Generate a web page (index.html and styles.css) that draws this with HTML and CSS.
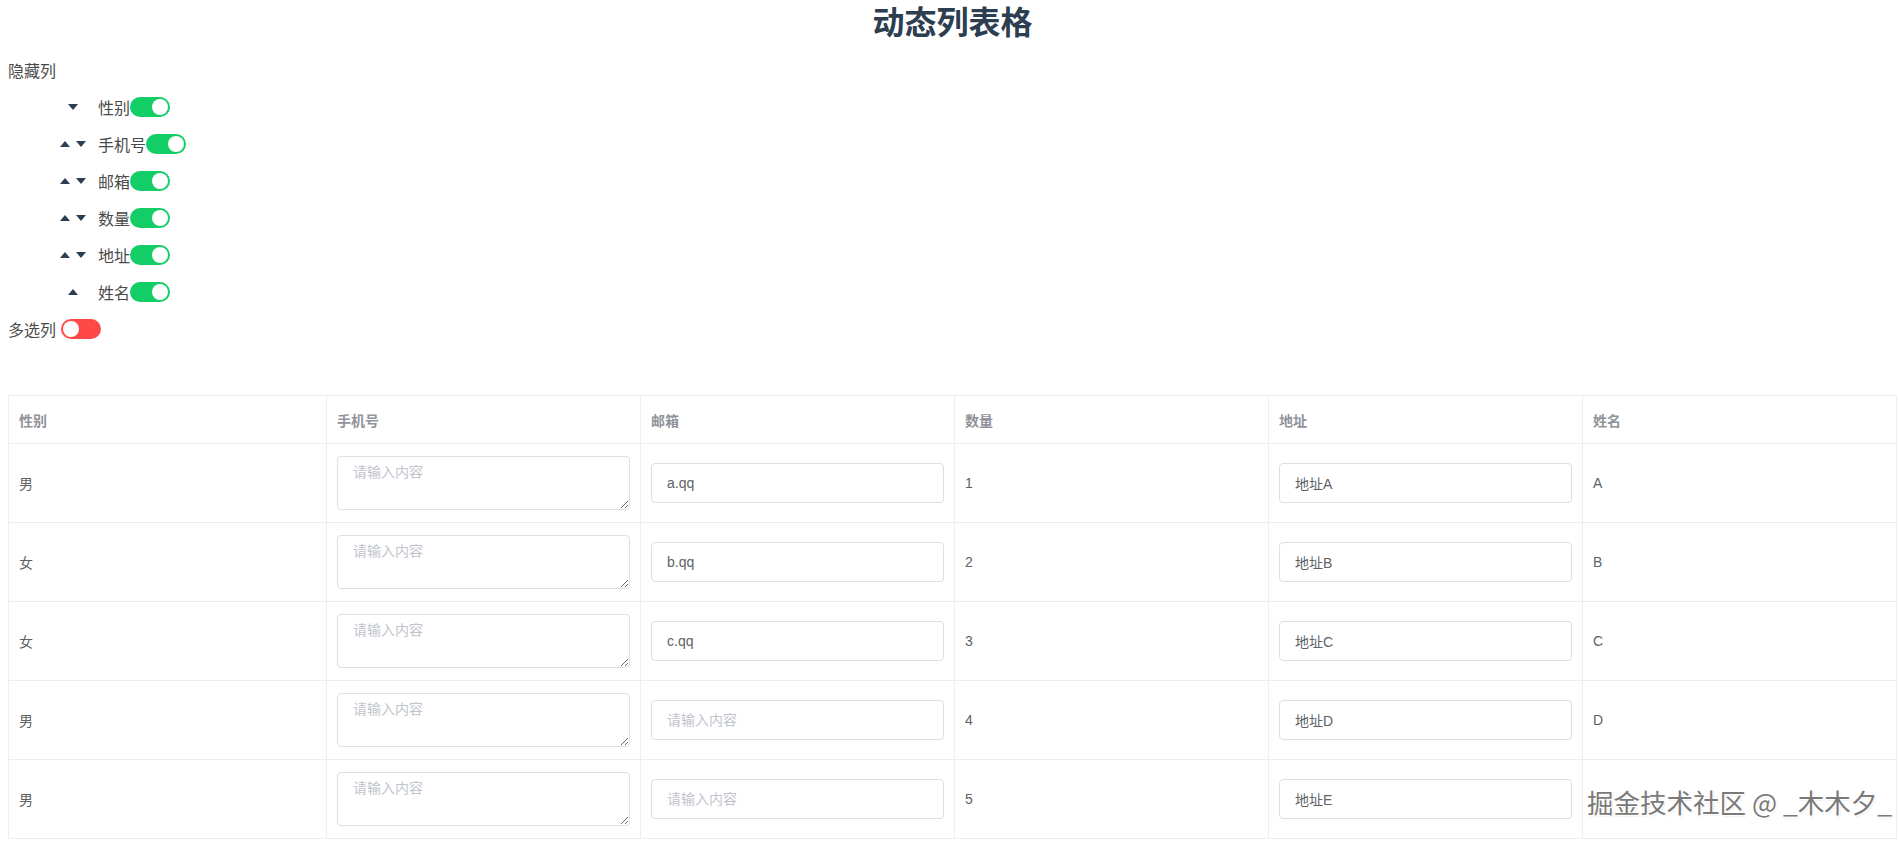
FILE: index.html
```html
<!DOCTYPE html>
<html lang="zh">
<head>
<meta charset="utf-8">
<title>动态列表格</title>
<link rel="stylesheet" href="styles.css">
</head>
<body>
<div class="page">
  <h1 class="title">动态列表格</h1>

  <div class="section-label">隐藏列</div>
  <ul class="col-list">
    <li class="col-item">
      <span class="arrows">
        <svg class="caret" width="10" height="6" viewBox="0 0 10 6"><polygon points="0,0 10,0 5,6"/></svg>
      </span>
      <span class="col-name">性别</span>
      <span class="switch on"><span class="knob"></span></span>
    </li>
    <li class="col-item">
      <span class="arrows">
        <svg class="caret" width="10" height="6" viewBox="0 0 10 6"><polygon points="0,6 10,6 5,0"/></svg>
        <svg class="caret" width="10" height="6" viewBox="0 0 10 6"><polygon points="0,0 10,0 5,6"/></svg>
      </span>
      <span class="col-name">手机号</span>
      <span class="switch on"><span class="knob"></span></span>
    </li>
    <li class="col-item">
      <span class="arrows">
        <svg class="caret" width="10" height="6" viewBox="0 0 10 6"><polygon points="0,6 10,6 5,0"/></svg>
        <svg class="caret" width="10" height="6" viewBox="0 0 10 6"><polygon points="0,0 10,0 5,6"/></svg>
      </span>
      <span class="col-name">邮箱</span>
      <span class="switch on"><span class="knob"></span></span>
    </li>
    <li class="col-item">
      <span class="arrows">
        <svg class="caret" width="10" height="6" viewBox="0 0 10 6"><polygon points="0,6 10,6 5,0"/></svg>
        <svg class="caret" width="10" height="6" viewBox="0 0 10 6"><polygon points="0,0 10,0 5,6"/></svg>
      </span>
      <span class="col-name">数量</span>
      <span class="switch on"><span class="knob"></span></span>
    </li>
    <li class="col-item">
      <span class="arrows">
        <svg class="caret" width="10" height="6" viewBox="0 0 10 6"><polygon points="0,6 10,6 5,0"/></svg>
        <svg class="caret" width="10" height="6" viewBox="0 0 10 6"><polygon points="0,0 10,0 5,6"/></svg>
      </span>
      <span class="col-name">地址</span>
      <span class="switch on"><span class="knob"></span></span>
    </li>
    <li class="col-item">
      <span class="arrows">
        <svg class="caret" width="10" height="6" viewBox="0 0 10 6"><polygon points="0,6 10,6 5,0"/></svg>
      </span>
      <span class="col-name">姓名</span>
      <span class="switch on"><span class="knob"></span></span>
    </li>
  </ul>

  <div class="multi-row">
    <span class="section-label inline">多选列</span>
    <span class="switch off"><span class="knob"></span></span>
  </div>

  <table class="data-table">
    <colgroup>
      <col class="c-first">
      <col class="c-std">
      <col class="c-std">
      <col class="c-std">
      <col class="c-std">
      <col class="c-std">
    </colgroup>
    <thead>
      <tr class="head-row">
        <th>性别</th><th>手机号</th><th>邮箱</th><th>数量</th><th>地址</th><th>姓名</th>
      </tr>
    </thead>
    <tbody>
      <tr class="body-row">
        <td>男</td>
        <td><textarea class="ta" rows="2" placeholder="请输入内容"></textarea></td>
        <td><input class="inp" type="text" value="a.qq" placeholder="请输入内容"></td>
        <td>1</td>
        <td><input class="inp" type="text" value="地址A" placeholder="请输入内容"></td>
        <td>A</td>
      </tr>
      <tr class="body-row">
        <td>女</td>
        <td><textarea class="ta" rows="2" placeholder="请输入内容"></textarea></td>
        <td><input class="inp" type="text" value="b.qq" placeholder="请输入内容"></td>
        <td>2</td>
        <td><input class="inp" type="text" value="地址B" placeholder="请输入内容"></td>
        <td>B</td>
      </tr>
      <tr class="body-row">
        <td>女</td>
        <td><textarea class="ta" rows="2" placeholder="请输入内容"></textarea></td>
        <td><input class="inp" type="text" value="c.qq" placeholder="请输入内容"></td>
        <td>3</td>
        <td><input class="inp" type="text" value="地址C" placeholder="请输入内容"></td>
        <td>C</td>
      </tr>
      <tr class="body-row">
        <td>男</td>
        <td><textarea class="ta" rows="2" placeholder="请输入内容"></textarea></td>
        <td><input class="inp" type="text" value="" placeholder="请输入内容"></td>
        <td>4</td>
        <td><input class="inp" type="text" value="地址D" placeholder="请输入内容"></td>
        <td>D</td>
      </tr>
      <tr class="body-row">
        <td>男</td>
        <td><textarea class="ta" rows="2" placeholder="请输入内容"></textarea></td>
        <td><input class="inp" type="text" value="" placeholder="请输入内容"></td>
        <td>5</td>
        <td><input class="inp" type="text" value="地址E" placeholder="请输入内容"></td>
        <td></td>
      </tr>
    </tbody>
  </table>
</div>
<div class="watermark">掘金技术社区 @ _木木夕_</div>
</body>
</html>
```

FILE: styles.css
```css
html, body {
  margin: 0;
  padding: 0;
  background: #ffffff;
}

body {
  font-family: "Liberation Sans", "Noto Sans CJK SC", sans-serif;
  color: #4a4a4a;
  position: relative;
  min-height: 842px;
  overflow: hidden;
}

.page {
  width: 1889px;
  margin-left: 8px;
}

.title {
  margin: 0;
  font-family: "Noto Sans CJK SC", sans-serif;
  font-size: 32px;
  line-height: 40px;
  font-weight: 700;
  color: #2c3e50;
  text-align: center;
}

.section-label {
  font-family: "Noto Sans CJK SC", sans-serif;
  font-size: 16px;
  line-height: 24px;
  color: #4a4a4a;
  margin-top: 18px;
}

.section-label.inline {
  margin-top: 0;
}

.col-list {
  list-style: none;
  margin: 6px 0 0 0;
  padding: 0 0 0 40px;
}

.col-item {
  display: flex;
  align-items: center;
  height: 37px;
}

.arrows {
  width: 50px;
  display: flex;
  justify-content: center;
  align-items: center;
  gap: 6px;
}

.caret {
  display: block;
  fill: #2c3e50;
}

.col-name {
  font-family: "Noto Sans CJK SC", sans-serif;
  font-size: 16px;
  line-height: 24px;
  color: #4a4a4a;
}

.switch {
  position: relative;
  display: inline-block;
  width: 40px;
  height: 20px;
  border-radius: 10px;
  box-sizing: border-box;
  flex: none;
}

.switch.on {
  background: #13ce66;
}

.switch.off {
  background: #ff4949;
}

.knob {
  position: absolute;
  top: 2px;
  width: 16px;
  height: 16px;
  border-radius: 50%;
  background: #ffffff;
}

.switch.on .knob {
  left: 22px;
}

.switch.off .knob {
  left: 2px;
}

.multi-row {
  display: flex;
  align-items: center;
  gap: 5px;
  margin-top: 7px;
  height: 24px;
}

.data-table {
  margin-top: 54px;
  width: 1889px;
  table-layout: fixed;
  border-collapse: collapse;
  border: 1px solid #ebeef5;
  font-size: 14px;
  color: #606266;
}

.c-first {
  width: 318px;
}

.c-std {
  width: 314px;
}

.data-table th,
.data-table td {
  border-right: 1px solid #ebeef5;
  border-bottom: 1px solid #ebeef5;
  padding: 0 10px;
  text-align: left;
  vertical-align: middle;
  box-sizing: border-box;
}

.data-table th {
  font-family: "Noto Sans CJK SC", sans-serif;
  font-weight: 700;
  color: #909399;
  height: 48px;
  font-size: 14px;
}

.data-table td {
  height: 79px;
  font-family: "Liberation Sans", "Noto Sans CJK SC", sans-serif;
}

.ta {
  display: block;
  width: 100%;
  height: 54px;
  box-sizing: border-box;
  padding: 5px 15px;
  border: 1px solid #dcdfe6;
  border-radius: 4px;
  font-family: "Liberation Sans", "Noto Sans CJK SC", sans-serif;
  font-size: 14px;
  line-height: 1.5;
  color: #606266;
  resize: vertical;
  background: #ffffff;
  margin: 0;
}

.inp {
  display: block;
  width: 100%;
  height: 40px;
  box-sizing: border-box;
  padding: 0 15px;
  border: 1px solid #dcdfe6;
  border-radius: 4px;
  font-family: "Liberation Sans", "Noto Sans CJK SC", sans-serif;
  font-size: 14px;
  color: #606266;
  background: #ffffff;
  outline: none;
  margin: 0;
}

.ta::placeholder,
.inp::placeholder {
  color: #c0c4cc;
}

.watermark {
  position: absolute;
  top: 785px;
  left: 1587px;
  font-family: "Noto Sans CJK SC", sans-serif;
  font-size: 26.5px;
  line-height: 34px;
  color: #7a7a7a;
  white-space: nowrap;
  text-shadow: 1px 1px 0 #ffffff, -1px -1px 0 #ffffff, 1px -1px 0 #ffffff, -1px 1px 0 #ffffff, 1px 1px 2px #cccccc;
}
```
